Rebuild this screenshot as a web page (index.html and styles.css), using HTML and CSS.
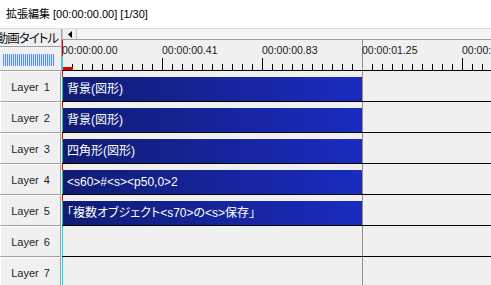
FILE: index.html
```html
<!DOCTYPE html>
<html lang="ja">

<head>
    <meta charset="UTF-8">
    <title>拡張編集</title>
    <link rel="stylesheet" href="styles.css">
</head>

<body>
    <div class="titlebar">拡張編集 [00:00:00.00] [1/30]</div>

    <div class="editor">
        <!-- layer names -->
        <aside class="side">
            <div class="side-top">
                <div class="scene-btn"><span>動画タイトル</span></div>
                <div class="zoom-bar">
                    <div class="zoom-gauge"></div>
                </div>
            </div>
            <div class="layer-head">Layer 1</div>
            <div class="layer-head">Layer 2</div>
            <div class="layer-head">Layer 3</div>
            <div class="layer-head">Layer 4</div>
            <div class="layer-head">Layer 5</div>
            <div class="layer-head">Layer 6</div>
            <div class="layer-head">Layer 7</div>
        </aside>

        <!-- timeline -->
        <section class="timeline">
            <div class="hscroll">
                <div class="scroll-btn">
                    <svg width="4" height="7" viewBox="0 0 4 7"><polygon points="4,0 4,7 0,3.5" fill="#000" /></svg>
                </div>
            </div>
            <div class="ruler">
                <span class="time">00:00:00.00</span>
                <span class="time">00:00:00.41</span>
                <span class="time">00:00:00.83</span>
                <span class="time">00:00:01.25</span>
                <span class="time">00:00:01.66</span>
            </div>
            <div class="track used"><div class="clip">背景(図形)</div></div>
            <div class="track used"><div class="clip">背景(図形)</div></div>
            <div class="track used"><div class="clip">四角形(図形)</div></div>
            <div class="track used"><div class="clip">&lt;s60&gt;#&lt;s&gt;&lt;p50,0&gt;2</div></div>
            <div class="track used"><div class="clip">「複数オブジェクト&lt;s70&gt;の&lt;s&gt;保存」</div></div>
            <div class="track"></div>
            <div class="track"></div>
        </section>
    </div>
</body>

</html>
```

FILE: styles.css
```css
body {
    margin: 0;
    width: 491px;
    height: 285px;
    overflow: hidden;
    background-color: #f0f0f0;
    font-family: "Liberation Sans", "Noto Sans CJK JP", sans-serif;
    color: #000;
}

.titlebar {
    height: 28px;
    line-height: 28px;
    padding-left: 6px;
    background-color: #fff;
    border-bottom: 1px solid #dcdcdc;
    font-size: 11px;
}

.editor {
    display: grid;
    grid-template-columns: 62px 1fr;
}

.side-top {
    height: 42px;
    box-sizing: border-box;
    border-right: 1px solid #a0a0a0;
}

.scene-btn {
    height: 18px;
    box-sizing: border-box;
    border-bottom: 1px solid #a0a0a0;
    padding-right: 3px;
    display: flex;
    align-items: center;
    justify-content: flex-end;
    overflow: hidden;
    white-space: nowrap;
    font-size: 12.5px;
    letter-spacing: -1px;
    font-feature-settings: "palt";
    color: #111;
}

.zoom-bar {
    height: 24px;
    box-sizing: border-box;
    border-bottom: 1px solid #a0a0a0;
    padding: 7px 6px 0 3px;
}

.zoom-gauge {
    height: 12px;
    background: repeating-linear-gradient(to right, #5b8fe0 0 1px, #dde7f7 1px 2px);
}

.layer-head {
    width: 61px;
    height: 31px;
    box-sizing: border-box;
    border: 1px solid;
    border-color: #fff #a0a0a0 #a0a0a0 #fff;
    display: flex;
    align-items: center;
    justify-content: center;
    font-size: 11px;
    word-spacing: 2px;
    color: #1e1e1e;
}

.timeline {
    min-width: 0;
}

.hscroll {
    height: 11px;
    box-sizing: border-box;
    border-bottom: 1px solid #a0a0a0;
    background-color: #f4f4f4;
    display: flex;
}

.scroll-btn {
    width: 15px;
    box-sizing: border-box;
    border-left: 1px solid #c8c8c8;
    border-right: 1px solid #c8c8c8;
    background-color: #f0f0f0;
    display: flex;
    align-items: center;
    justify-content: center;
}

.ruler {
    height: 31px;
    box-sizing: border-box;
    border-bottom: 1px solid #000;
    display: flex;
    overflow: hidden;
    background:
        linear-gradient(#e00000, #e00000) 1px 27px / 10px 3px no-repeat,
        linear-gradient(#e00000, #e00000) 0 0 / 1px 16px no-repeat,
        linear-gradient(#00e8ff, #00e8ff) 0 16px / 1px 14px no-repeat,
        linear-gradient(#909090, #909090) 300px 0 / 1px 30px no-repeat,
        repeating-linear-gradient(to right, #000 0 1px, transparent 1px 100px) 0 18px / 100% 12px no-repeat,
        repeating-linear-gradient(to right, #000 0 1px, transparent 1px 10px) 0 24px / 100% 6px no-repeat,
        #f0f0f0;
}

.time {
    flex: none;
    width: 100px;
    padding-top: 4px;
    font-size: 10.5px;
    color: #1a1a1a;
}

.track {
    height: 31px;
    box-sizing: border-box;
    border-bottom: 1px solid #000;
    padding: 6px 0 0 1px;
    background:
        linear-gradient(#909090, #909090) 300px 0 / 1px 100% no-repeat,
        linear-gradient(#00e8ff, #00e8ff) 0 0 / 1px 100% no-repeat,
        #f0f0f0;
}

.track.used {
    background:
        linear-gradient(#909090, #909090) 300px 0 / 1px 100% no-repeat,
        linear-gradient(#e00000, #e00000) 0 0 / 1px 6px no-repeat,
        linear-gradient(#18c890, #18c890) 0 6px / 1px 24px no-repeat,
        #f0f0f0;
}

.clip {
    width: 299px;
    height: 24px;
    box-sizing: border-box;
    padding-left: 4px;
    background: linear-gradient(to right, #101c72, #1a2cc0);
    color: #fff;
    font-size: 12px;
    line-height: 24px;
    white-space: nowrap;
    overflow: hidden;
    font-feature-settings: "palt";
}
```
